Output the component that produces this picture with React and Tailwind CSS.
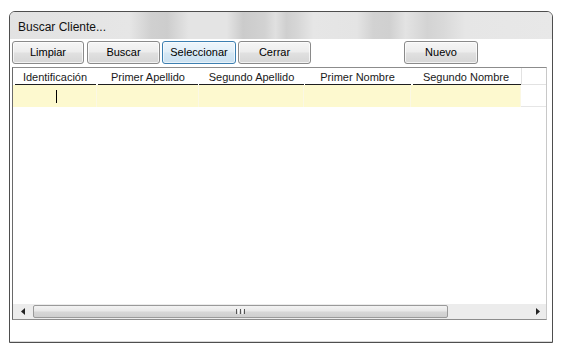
import React from "react";

const btn =
  "h-[23px] flex items-center justify-center rounded-[3px] border border-[#8a8a8a] bg-[linear-gradient(180deg,#f6f6f6_0%,#ededed_45%,#e0e0e0_55%,#d6d6d6_100%)] text-[11px] text-black shadow-[inset_0_0_0_1px_rgba(255,255,255,0.7)]";

const cols = [
  { w: "w-[84px]", label: "Identificación", ul: "ml-[2px] mr-[1px]" },
  { w: "w-[102px]", label: "Primer Apellido", ul: "ml-[1px] mr-[1px]" },
  { w: "w-[105px]", label: "Segundo Apellido", ul: "ml-[0px] mr-[0px]" },
  { w: "w-[107px]", label: "Primer Nombre", ul: "ml-[1px] mr-[0px]" },
  { w: "w-[110px]", label: "Segundo Nombre", ul: "ml-[2px] mr-[0px]" },
];

export default function App() {
  return (
    <div className="w-[570px] h-[353px] bg-white pt-[11px] pl-[9px] font-['Liberation_Sans',Arial,sans-serif] overflow-hidden">
      <div className="w-[544px] h-[332px] border border-[#4e4e4e] rounded-t-[6px] flex flex-col overflow-hidden bg-white">
        {/* Title bar */}
        <div className="h-[27px] shrink-0 pl-[8px] pt-[8px] text-[12px] leading-[14px] text-[#111] bg-[linear-gradient(90deg,#e2e2e2_0%,#e6e6e6_22%,#d0d0d0_26%,#cdcdcd_29%,#e4e4e4_33%,#e4e4e4_40%,#cbcbcb_43%,#d2d2d2_47%,#e0e0e0_49%,#cfcfcf_51%,#d6d6d6_53%,#e6e6e6_56%,#e4e4e4_64%,#d2d2d2_67%,#d0d0d0_70%,#e3e3e3_73%,#d3d3d3_77%,#d9d9d9_80%,#e6e6e6_84%,#e8e8e8_100%)]">
          Buscar Cliente...
        </div>
        {/* Content */}
        <div className="flex-1 flex flex-col bg-white border-b border-[#d8d8d8]">
          <div className="flex mt-[2px] ml-[2px] h-[23px]">
            <div className={`${btn} w-[72px]`}>Limpiar</div>
            <div className={`${btn} w-[73px] ml-[3px]`}>Buscar</div>
            <div className="h-[23px] w-[74px] ml-[2px] flex items-center justify-center rounded-[3px] border border-[#3c7fb1] bg-[linear-gradient(180deg,#eef6fc_0%,#e2eff8_45%,#d4e7f4_55%,#cbe1f1_100%)] text-[11px] text-black shadow-[inset_0_0_0_1px_rgba(255,255,255,0.6)]">
              Seleccionar
            </div>
            <div className={`${btn} w-[73px] ml-[2px]`}>Cerrar</div>
            <div className={`${btn} w-[74px] ml-[93px]`}>Nuevo</div>
          </div>

          {/* Grid */}
          <div className="mt-[3px] ml-[2px] w-[535px] h-[253px] border border-[#8c8c8c] border-r-[#c8c8c8] border-l-[#6a6a6a] flex flex-col">
            {/* Header */}
            <div className="h-[17px] flex shrink-0">
              {cols.map((c) => (
                <div key={c.label} className={`${c.w} flex flex-col`}>
                  <div className="flex-1 flex items-center justify-center text-[11px] leading-[12px] text-[#1a1a1a] pt-[1px]">
                    {c.label}
                  </div>
                  <div className={`h-[1px] bg-[#1e1e1e] ${c.ul}`} />
                </div>
              ))}
              <div className="flex-1 border-b border-l border-[#e2e2e2]" />
            </div>
            {/* Yellow row */}
            <div className="h-[22px] flex shrink-0">
              {cols.map((c, i) => (
                <div
                  key={c.label}
                  className={`${c.w} bg-[#fdf9cf] border-r border-[#fbf8e4] flex items-center`}
                >
                  {i === 0 && <div className="ml-[43px] w-[1px] h-[13px] bg-black" />}
                </div>
              ))}
              <div className="flex-1 border-b border-[#e6e6e6]" />
            </div>
            <div className="flex-1 bg-white" />
            {/* Scrollbar */}
            <div className="h-[15px] flex items-stretch bg-[#ececec] shrink-0">
              <div className="w-[20px] flex items-center justify-center">
                <svg width="4" height="7" viewBox="0 0 4 7">
                  <path d="M4 0 L0 3.5 L4 7 Z" fill="#222" />
                </svg>
              </div>
              <div className="w-[415px] my-[1px] rounded-[2px] border border-[#9a9a9a] bg-[linear-gradient(180deg,#f3f3f3_0%,#e8e8e8_45%,#d6d6d6_55%,#cfcfcf_100%)] flex items-center justify-center gap-[1px]">
                <div className="w-[1px] h-[5px] bg-[#555]" />
                <div className="w-[1px] h-[5px] bg-[#f8f8f8]" />
                <div className="w-[1px] h-[5px] bg-[#555]" />
                <div className="w-[1px] h-[5px] bg-[#f8f8f8]" />
                <div className="w-[1px] h-[5px] bg-[#555]" />
              </div>
              <div className="flex-1" />
              <div className="w-[17px] flex items-center justify-center">
                <svg width="4" height="7" viewBox="0 0 4 7">
                  <path d="M0 0 L4 3.5 L0 7 Z" fill="#222" />
                </svg>
              </div>
            </div>
          </div>
        </div>
      </div>
    </div>
  );
}
